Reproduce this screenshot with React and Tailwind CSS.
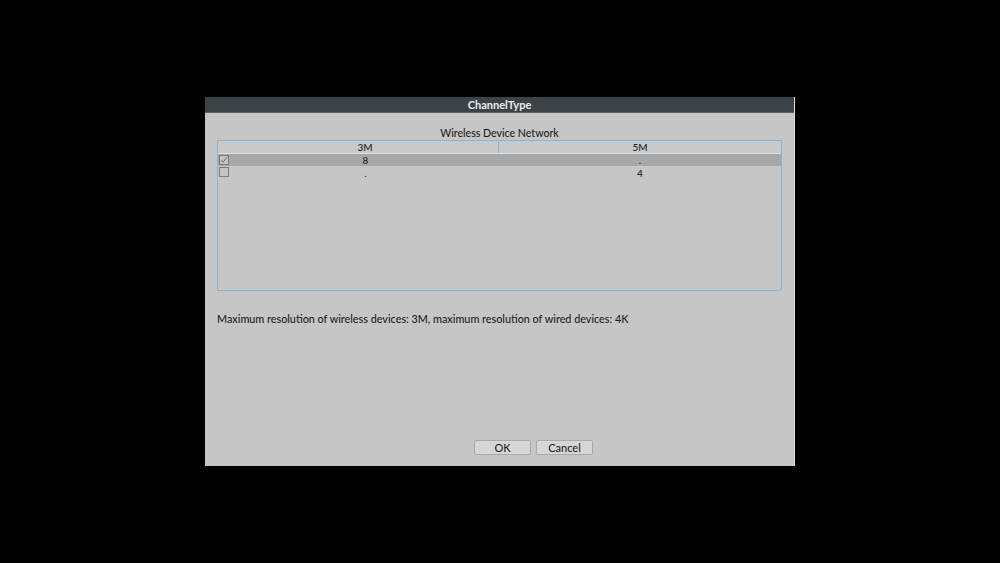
import React from "react";

function Check({ checked }) {
  return (
    <div className="w-[10px] h-[10px] border border-[#7a7a7a] bg-[#c4c4c4] flex items-center justify-center">
      {checked && (
        <svg width="8" height="8" viewBox="0 0 8 8">
          <path d="M1 4.2 L3 6.3 L7 1.2" fill="none" stroke="#6a6a6a" strokeWidth="1" />
        </svg>
      )}
    </div>
  );
}

export default function App() {
  const font = { fontFamily: 'Lato, "Noto Sans", sans-serif' };
  return (
    <div className="w-[1000px] h-[563px] bg-black pt-[97px] pl-[205px]" style={font}>
      <div className="w-[590px] h-[369px] bg-[#c6c6c6] flex flex-col border-r border-[#dcdcdc]">
        <div className="h-[16px] bg-[#3c4347] flex items-center justify-center text-[11px] leading-none text-[#ececec] font-bold border-b border-[#566066]">
          ChannelType
        </div>
        <div className="flex-1 flex flex-col pl-[12px] pr-[12px]">
          <div className="h-[27px] flex items-end justify-center pb-[1px] text-[10.6px] leading-none text-[#1e1e1e] font-medium">
            Wireless Device Network
          </div>
          <div className="h-[151px] border border-[#86b4da] rounded-br-[3px] flex flex-col">
            <div className="h-[13px] flex border-b border-[#d6e2ec] bg-[#c9c9c9] text-[10px] leading-none text-[#1e1e1e] font-medium">
              <div className="w-[281px] border-r border-[#86b4da] flex items-center justify-center pl-[14px]">3M</div>
              <div className="flex-1 flex items-center justify-center">5M</div>
            </div>
            <div className="h-[12px] flex bg-[#a8a8a8] text-[10px] leading-none text-[#1e1e1e] items-center font-medium">
              <div className="w-[281px] relative flex items-center justify-center h-full pl-[14px]">
                <div className="absolute left-[1px] top-[1px]"><Check checked /></div>
                8
              </div>
              <div className="flex-1 flex items-center justify-center h-full">.</div>
            </div>
            <div className="h-[13px] flex text-[10px] leading-none text-[#1e1e1e] items-center font-medium">
              <div className="w-[281px] relative flex items-center justify-center h-full pl-[14px]">
                <div className="absolute left-[1px] top-[1px]"><Check /></div>
                .
              </div>
              <div className="flex-1 flex items-center justify-center h-full">4</div>
            </div>
          </div>
          <div className="mt-[23px] text-[10.8px] leading-none text-[#1e1e1e] font-medium">
            Maximum resolution of wireless devices: 3M, maximum resolution of wired devices: 4K
          </div>
          <div className="mt-[115px] flex gap-[5px] pl-[257px]">
            <button className="w-[57px] h-[15px] rounded-[2px] bg-[#d6d6d6] border border-[#a9a9a9] text-[11px] leading-none text-[#1e1e1e] font-medium flex items-center justify-center">OK</button>
            <button className="w-[57px] h-[15px] rounded-[2px] bg-[#d6d6d6] border border-[#a9a9a9] text-[11px] leading-none text-[#1e1e1e] font-medium flex items-center justify-center">Cancel</button>
          </div>
        </div>
      </div>
    </div>
  );
}
